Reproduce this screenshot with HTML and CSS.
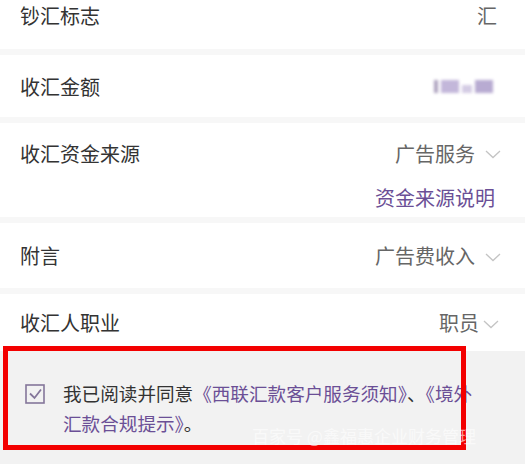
FILE: index.html
```html
<!DOCTYPE html>
<html lang="zh-CN">
<head>
  <meta charset="UTF-8" />
  <meta name="viewport" content="width=device-width, initial-scale=1.0" />
  <title>收汇信息</title>
  <link rel="stylesheet" href="styles.css">
</head>
<body>
  <div class="form-list">
    <div class="row row-first">
      <span class="label">钞汇标志</span>
      <span class="value">汇</span>
    </div>
    <div class="sep"></div>
    <div class="row row-amount">
      <span class="label">收汇金额</span>
      <span class="blurred">
        <i class="b1"></i><i class="b2"></i><i class="b3"></i><i class="b4"></i>
      </span>
    </div>
    <div class="sep"></div>
    <div class="row-source">
      <div class="row-line">
        <span class="label">收汇资金来源</span>
        <span class="value select">广告服务<svg class="chevron" width="16" height="9" viewBox="0 0 16 9"><path d="M1 1 L8 7.5 L15 1"/></svg></span>
      </div>
      <div class="row-link">
        <a class="link" href="#">资金来源说明</a>
      </div>
    </div>
    <div class="sep"></div>
    <div class="row row-note">
      <span class="label">附言</span>
      <span class="value select">广告费收入<svg class="chevron" width="16" height="9" viewBox="0 0 16 9"><path d="M1 1 L8 7.5 L15 1"/></svg></span>
    </div>
    <div class="sep"></div>
    <div class="row row-job">
      <span class="label">收汇人职业</span>
      <span class="value select">职员<svg class="chevron tight" width="16" height="9" viewBox="0 0 16 9"><path d="M1 1 L8 7.5 L15 1"/></svg></span>
    </div>
  </div>

  <div class="agree">
    <span class="checkbox">
      <svg width="20" height="20" viewBox="0 0 20 20">
        <rect x="1" y="1" width="18" height="18" fill="none" stroke="#84769a" stroke-width="1.6"/>
        <path d="M5 9.5 L9.5 14 L16 5.5" fill="none" stroke="#84769a" stroke-width="1.8"/>
      </svg>
    </span>
    <p class="agree-text">我已阅读并同意<a href="#">《西联汇款客户服务须知》</a>、<a href="#">《境外汇款合规提示》</a>。</p>
    <div class="mark-box"></div>
    <div class="watermark">百家号 @鑫福惠企业财务管理</div>
  </div>
</body>
</html>
```

FILE: styles.css
```css
html, body {
  margin: 0;
  height: 100%;
  background: #f2f2f2;
  overflow: hidden;
  font-family: "Noto Sans CJK SC", "Noto Sans", sans-serif;
}
.form-list {
  background: #fff;
  margin-top: -19px;
}
.row, .row-line, .row-link {
  display: flex;
  align-items: center;
  justify-content: space-between;
  padding: 0 28px 0 20px;
}
.row-first {
  height: 68px;
}
.row-amount {
  height: 62px;
}
.row-note {
  height: 65px;
  padding-right: 24px;
}
.row-job {
  height: 57px;
  padding-right: 26px;
}
.row-source {
  padding: 16px 0 6px;
}
.row-line {
  height: 28px;
  padding-right: 24px;
}
.row-link {
  height: 28px;
  margin-top: 16px;
  justify-content: flex-end;
  padding-right: 30px;
}
.sep {
  height: 6px;
  background: #f7f7f7;
}
.label {
  font-size: 20px;
  color: #333;
}
.value {
  font-size: 20px;
  color: #666;
}
.select {
  display: flex;
  align-items: center;
}
.chevron {
  margin: 3px 0 0 10px;
  fill: none;
  stroke: #c4c4c4;
  stroke-width: 1.3;
}
.chevron.tight {
  margin-left: 4px;
}
.link {
  font-size: 20px;
  color: #6b4f96;
  text-decoration: none;
}
.blurred {
  display: flex;
  align-items: center;
  gap: 3px;
  height: 15px;
  filter: blur(1.4px);
  margin-right: 4px;
}
.blurred i {
  display: block;
  height: 13px;
  background: #c3b7da;
}
.blurred .b1 { width: 4px; background: #aea3c0; }
.blurred .b2 { width: 18px; }
.blurred .b3 { width: 10px; height: 8px; margin-top: 5px; background: #d4cce4; }
.blurred .b4 { width: 18px; background: #b8abd2; }

.agree {
  position: relative;
  display: flex;
  align-items: flex-start;
  padding: 27px 45px 0 25px;
  height: 87px;
}
.checkbox {
  flex: none;
  width: 20px;
  height: 20px;
  margin-top: 6px;
}
.agree-text {
  margin: 0 0 0 18px;
  font-size: 18.6px;
  line-height: 30px;
  color: #333;
}
.agree-text a {
  color: #6b4f96;
  text-decoration: none;
}
.mark-box {
  position: absolute;
  left: 3px;
  top: -5px;
  width: 453px;
  height: 94px;
  border: 5px solid #f30000;
}
.watermark {
  position: absolute;
  left: 252px;
  top: 72px;
  font-size: 17px;
  color: rgba(255, 255, 255, 0.6);
  white-space: nowrap;
}
```
